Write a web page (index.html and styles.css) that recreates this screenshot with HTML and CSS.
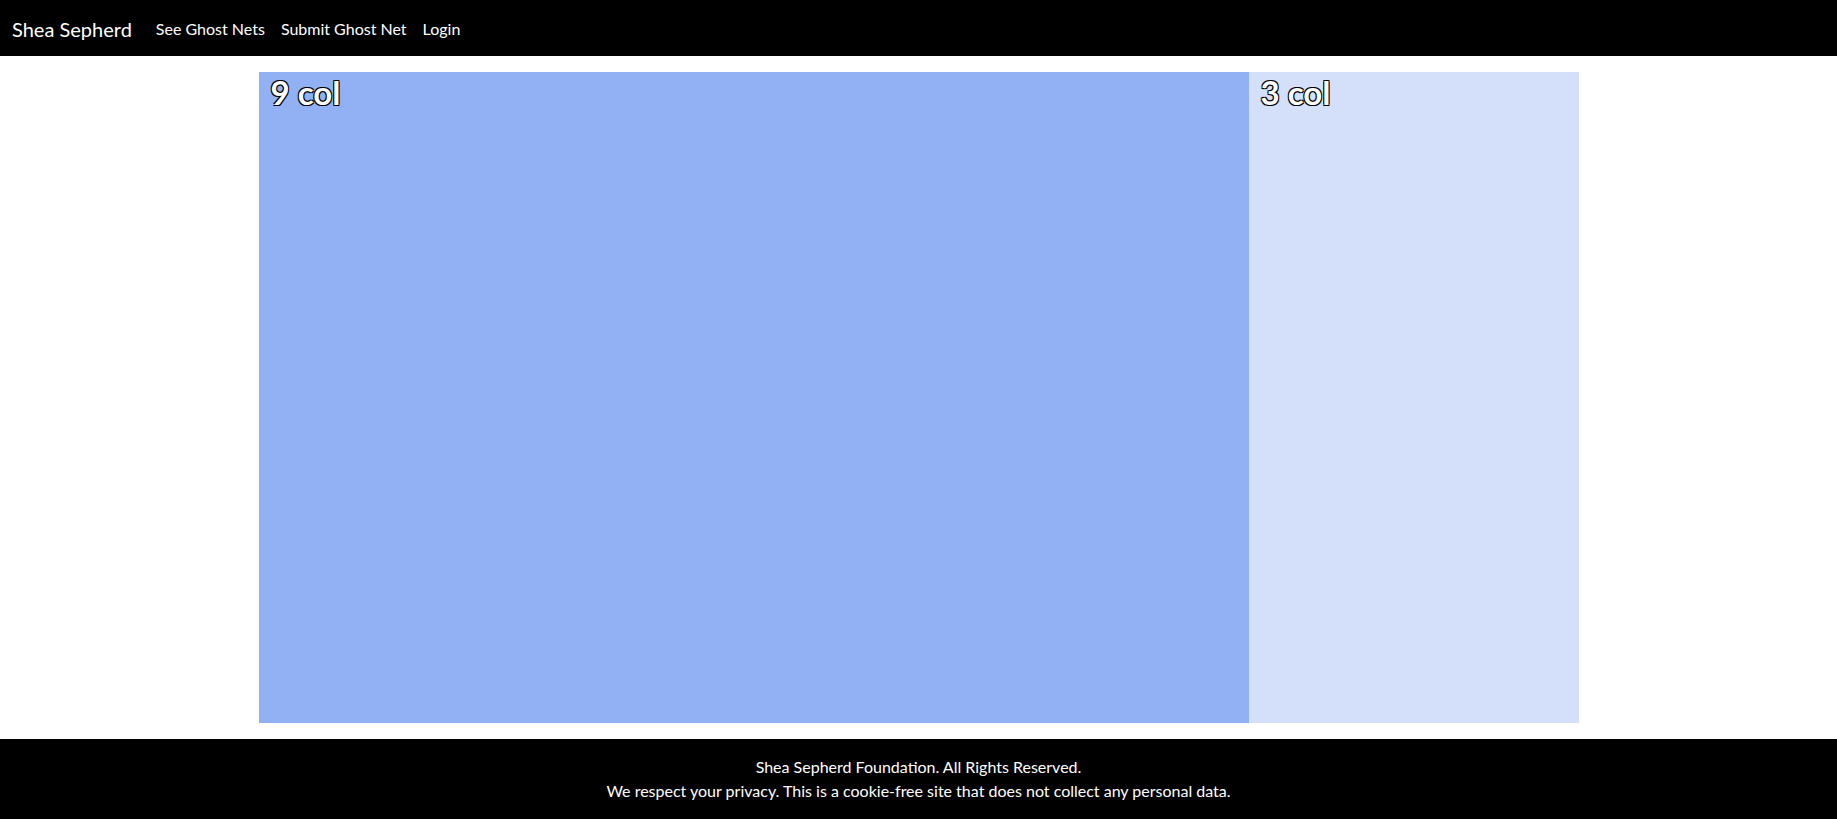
FILE: index.html
```html
<!DOCTYPE html>
<html lang="en">
  <head>
    <meta charset="UTF-8" />
    <meta name="viewport" content="width=device-width, initial-scale=1.0" />
    <title>Shea Sepherd</title>
    <link rel="stylesheet" href="styles.css">
  </head>
  <body>
    <div class="page">
      <nav class="navbar">
        <a class="navbar-brand" href="#">Shea Sepherd</a>
        <ul class="navbar-nav">
          <li><a class="nav-link" href="#">See Ghost Nets</a></li>
          <li><a class="nav-link" href="#">Submit Ghost Net</a></li>
          <li><a class="nav-link" href="#">Login</a></li>
        </ul>
      </nav>

      <main class="main">
        <div class="container">
          <div class="row">
            <div class="col col-9">
              <h2 class="col-label">9 col</h2>
            </div>
            <div class="col col-3">
              <h2 class="col-label">3 col</h2>
            </div>
          </div>
        </div>
      </main>

      <footer class="footer">
        <p>Shea Sepherd Foundation. All Rights Reserved.</p>
        <p>We respect your privacy. This is a cookie-free site that does not collect any personal data.</p>
      </footer>
    </div>
  </body>
</html>
```

FILE: styles.css
```css
:root {
  --nav-bg: #000;
  --col-primary: #91b1f4;
  --col-secondary: #d4dffa;
}

* {
  box-sizing: border-box;
}

html,
body {
  height: 100%;
}

body {
  margin: 0;
  font-family: Lato, "Noto Sans", sans-serif;
  font-size: 16px;
  line-height: 1.5;
  color: #212529;
  background-color: #fff;
}

.page {
  display: flex;
  flex-direction: column;
  min-height: 100%;
}

/* Top navigation */
.navbar {
  display: flex;
  align-items: center;
  height: 56px;
  padding: 9px 12px 7px;
  background-color: var(--nav-bg);
}

.navbar a {
  color: #fff;
  text-decoration: none;
}

.navbar-brand {
  font-size: 20px;
  margin-right: 16px;
}

.navbar-nav {
  display: flex;
  margin: 0;
  padding: 0;
  list-style: none;
}

.nav-link {
  display: block;
  padding: 8px;
}

/* Main content */
.main {
  flex: 1;
  display: flex;
  padding: 16px 0;
}

.container {
  display: flex;
  width: 1320px;
  margin: 0 auto;
}

.row {
  display: flex;
  flex: 1;
}

.col {
  padding: 0 12px;
}

.col-9 {
  width: 75%;
  background-color: var(--col-primary);
}

.col-3 {
  width: 25%;
  background-color: var(--col-secondary);
}

.col-label {
  margin: 0;
  padding-top: 1px;
  font-size: 33px;
  font-weight: 700;
  line-height: 1.2;
  color: #fff;
  text-shadow:
    -1px -1px 0 #000,
    1px -1px 0 #000,
    -1px 1px 0 #000,
    1px 1px 0 #000;
}

/* Footer */
.footer {
  padding: 16px 0;
  text-align: center;
  color: #fff;
  background-color: var(--nav-bg);
}

.footer p {
  margin: 0;
}
```
